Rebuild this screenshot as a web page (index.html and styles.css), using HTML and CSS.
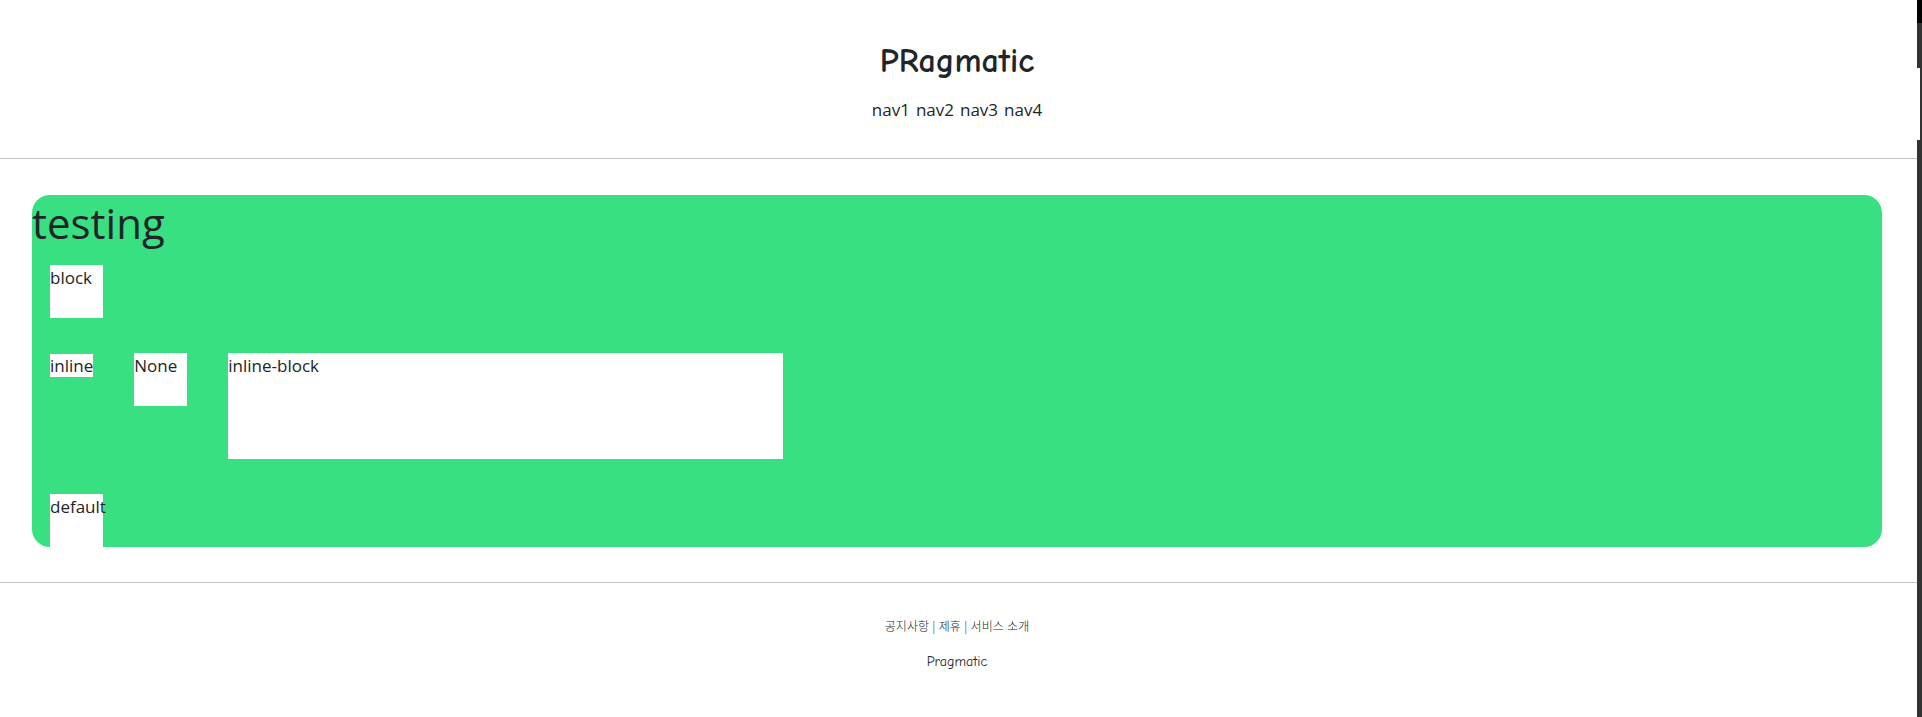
FILE: index.html
```html
<!DOCTYPE html>
<html lang="ko">
<head>
<meta charset="utf-8">
<title>PRagmatic</title>
<link rel="stylesheet" href="styles.css">
</head>
<body>
<div class="page">
  <header class="header">
    <h1 class="brand">PRagmatic</h1>
    <nav class="nav"><span>nav1</span><span>nav2</span><span>nav3</span><span>nav4</span></nav>
  </header>
  <main class="main">
    <section class="panel">
      <h2 class="title">testing</h2>
      <div class="box">block</div>
      <div class="row">
        <span class="tag">inline</span>
        <div class="box">None</div>
        <div class="box wide">inline-block</div>
      </div>
      <div class="box">default</div>
    </section>
  </main>
  <footer class="footer">
    <p class="links">공지사항 | 제휴 | 서비스 소개</p>
    <p class="sign">Pragmatic</p>
  </footer>
</div>
<div class="edge" aria-hidden="true"><div class="cap"></div><div class="thumb"></div></div>
</body>
</html>
```
FILE: styles.css
```css
* { box-sizing: border-box; }
body {
  margin: 0;
  min-height: 100vh;
  display: flex;
  background: #fff;
  color: #212529;
  font: 400 17px/26px "Open Sans", "Noto Sans CJK KR", sans-serif;
}
h1, h2, p { margin: 0; }
.page { flex: 1; min-width: 0; }
.header {
  padding: 38px 3px 35px 0;
  border-bottom: 1px solid #c4c4c4;
  text-align: center;
}
.brand {
  margin-bottom: 13px;
  font: 700 34px/46px "Comic Neue", "Lato", cursive;
}
.nav { display: flex; justify-content: center; gap: 6px; }
.main { padding: 36px 35px 35px 32px; }
.panel {
  border-radius: 18px;
  background: #38e081;
}
.title {
  margin-bottom: 14px;
  font-size: 42px;
  font-weight: 400;
  line-height: 56px;
}
.box {
  width: 53px;
  height: 53px;
  margin-left: 18px;
  background: #fff;
}
.row {
  display: flex;
  align-items: flex-start;
  gap: 23px;
  margin: 35px 0;
}
.row .tag {
  margin: 1px 0 0 18px;
  background: #fff;
  line-height: 23px;
}
.wide { width: 30%; height: 106px; }
.footer {
  padding: 33px 3px 35px 0;
  border-top: 1px solid #c4c4c4;
  text-align: center;
}
.links {
  margin-bottom: 16px;
  font: 300 12px/20px "Noto Sans CJK KR", sans-serif;
}
.sign { font: 500 14px/20px "Comic Neue", "Lato", cursive; }
.edge { width: 5px; background: #333; }
.cap { height: 23px; margin-bottom: 45px; background: #000; }
.thumb { width: 3px; height: 72px; background: #fff; }
```
